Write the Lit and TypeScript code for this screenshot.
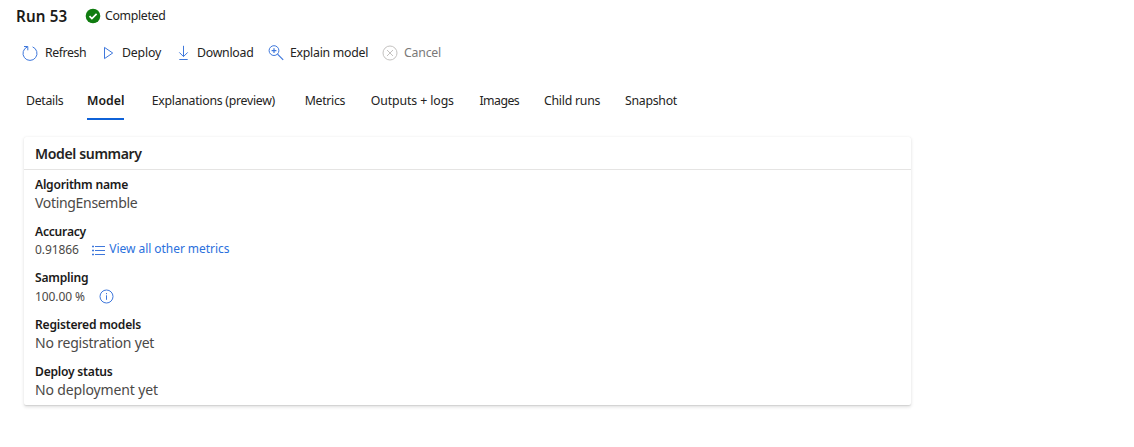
import { LitElement, html, css, svg } from "lit";
import { customElement } from "lit/decorators.js";

const icons: Record<string, unknown> = {
  refresh: svg`<path d="M5.4 1.9A7 7 0 1 0 10.6 1.9M2 1.5h3.8v3.8"/>`,
  deploy: svg`<path d="M4.5 2.4v11.2L12.7 8z"/>`,
  download: svg`<path d="M8.5 .8v10.7M4.3 7.4l4.2 4.2 4.2-4.2M4.3 14.5h8.4"/>`,
  explain: svg`<circle cx="6" cy="5.6" r="4.9"/><path stroke-width="1.2" d="m9.5 9.1 5.7 5.7M6 3.2V8M3.6 5.6h4.8"/>`,
  cancel: svg`<circle cx="8" cy="8" r="7"/><path d="m5 5 6 6M11 5l-6 6"/>`,
};

const actions = [
  { icon: "refresh", label: "Refresh", width: 78, spacing: -0.4 },
  { icon: "deploy", label: "Deploy", width: 75, spacing: -0.15 },
  { icon: "download", label: "Download", width: 93, spacing: -0.25 },
  { icon: "explain", label: "Explain model", width: 114, spacing: -0.26 },
  { icon: "cancel", label: "Cancel", width: 80, spacing: -0.2, disabled: true },
];

const tabs = [
  { label: "Details", width: 61, spacing: -0.3 },
  { label: "Model", width: 64.7, spacing: 0, active: true },
  { label: "Explanations (preview)", width: 153, spacing: -0.28 },
  { label: "Metrics", width: 66, spacing: -0.3 },
  { label: "Outputs + logs", width: 108.8, spacing: -0.1 },
  { label: "Images", width: 64.5, spacing: -0.55 },
  { label: "Child runs", width: 81, spacing: -0.25 },
  { label: "Snapshot", width: 60, spacing: -0.27 },
];

@customElement("app-root")
export class AppRoot extends LitElement {
  static styles = css`
    :host {
      display: block;
      box-sizing: border-box;
      height: 447px;
      overflow: hidden;
      background: #fff;
      color: #242322;
      font: 12.3px/18px "Noto Sans", sans-serif;
      white-space: nowrap;
    }
    svg { display: block; fill: none; stroke: #3f78dc; stroke-width: 1; flex: none; }
    .header { display: flex; align-items: center; height: 32px; padding-left: 16px; }
    .title { width: 69px; padding-bottom: 1px; font-size: 15.2px; font-weight: 600; letter-spacing: 0.15px; color: #1b1a19; }
    .state { margin-left: 4px; letter-spacing: -0.32px; }
    .toolbar { display: flex; align-items: center; height: 40px; padding: 1px 0 0 22px; }
    .action { display: flex; align-items: center; gap: 6px; }
    .action:first-child { gap: 7px; }
    .disabled { color: #7a7978; }
    .disabled svg { stroke: #c4c2c0; }
    .tabs { display: flex; height: 47px; padding: 0 0 0 26px; line-height: 56px; }
    .tab span { display: inline-block; height: 45px; }
    .active span { font-weight: 600; color: #1b1a19; border-bottom: 2px solid #0f62d8; }
    .card {
      box-sizing: border-box;
      width: 887px;
      height: 268px;
      margin: 17px 0 0 23.5px;
      border-radius: 2px;
      box-shadow: 0 1.6px 3.6px rgba(0, 0, 0, 0.13), 0 0.3px 0.9px rgba(0, 0, 0, 0.08);
    }
    .heading {
      box-sizing: border-box;
      height: 33px;
      padding-left: 11.5px;
      line-height: 34px;
      font-size: 14.1px;
      font-weight: 600;
      letter-spacing: -0.38px;
      color: #242322;
      border-bottom: 1px solid #e5e4e3;
    }
    .facts { padding: 6px 0 0 11.5px; }
    .fact { height: 46.7px; }
    .name { font-size: 12.1px; font-weight: 600; letter-spacing: -0.22px; color: #1b1a19; }
    .value { display: flex; align-items: center; height: 18.6px; color: #4b4947; }
    .large { font-size: 14px; letter-spacing: -0.2px; }
    .tight { letter-spacing: -0.32px; }
    .loose { letter-spacing: -0.14px; }
    .number { font-size: 12px; letter-spacing: -0.08px; }
    .link { display: flex; align-items: center; gap: 4px; margin-left: 13.5px; letter-spacing: -0.05px; color: #2b70dd; }
    .link span { padding-bottom: 1.4px; }
    .info { margin-left: 14px; }
  `;

  render() {
    return html`
      <div class="header">
        <span class="title">Run 53</span>
        <svg width="16" height="16" viewBox="0 0 16 16">
          <circle cx="8" cy="8" r="7.3" fill="#107c10" stroke="none" />
          <path d="m4.5 8.2 2.4 2.4 4.7-4.8" stroke="#fff" stroke-width="1.7" />
        </svg>
        <span class="state">Completed</span>
      </div>
      <div class="toolbar">
        ${actions.map(
          (a) => html`<div class="action ${a.disabled ? "disabled" : ""}" style="width:${a.width}px;letter-spacing:${a.spacing}px">
            <svg width="16" height="16" viewBox="0 0 16 16">${icons[a.icon]}</svg><span>${a.label}</span>
          </div>`
        )}
      </div>
      <div class="tabs">
        ${tabs.map(
          (t) => html`<div class="tab ${t.active ? "active" : ""}" style="width:${t.width}px;letter-spacing:${t.spacing}px"><span>${t.label}</span></div>`
        )}
      </div>
      <div class="card">
        <div class="heading">Model summary</div>
        <div class="facts">
          <div class="fact">
            <div class="name">Algorithm name</div>
            <div class="value large tight">VotingEnsemble</div>
          </div>
          <div class="fact">
            <div class="name">Accuracy</div>
            <div class="value number">
              <span>0.91866</span>
              <span class="link">
                <svg width="13" height="12" viewBox="0 0 13 12">
                  <path d="M3 2.5h10M3 6.5h10M3 10.5h10" />
                  <path d="M0 2.5h2M0 6.5h2M0 10.5h2" stroke-width="1.6" />
                </svg>
                <span>View all other metrics</span>
              </span>
            </div>
          </div>
          <div class="fact">
            <div class="name">Sampling</div>
            <div class="value number">
              <span>100.00 %</span>
              <svg class="info" width="15" height="15" viewBox="0 0 15 15">
                <circle cx="7.5" cy="7.5" r="6.5" />
                <path d="M7.5 6.3v4.5M7.5 4v1.2" />
              </svg>
            </div>
          </div>
          <div class="fact">
            <div class="name">Registered models</div>
            <div class="value large">No registration yet</div>
          </div>
          <div class="fact">
            <div class="name">Deploy status</div>
            <div class="value large loose">No deployment yet</div>
          </div>
        </div>
      </div>
    `;
  }
}
